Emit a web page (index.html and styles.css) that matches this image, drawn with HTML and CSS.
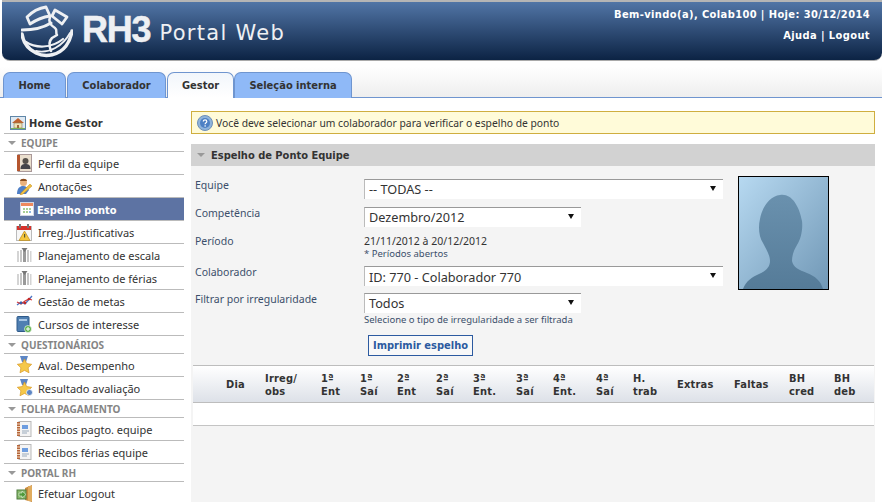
FILE: index.html
```html
<!DOCTYPE html>
<html lang="pt-BR">
<head>
<meta charset="utf-8">
<title>RH3 Portal Web</title>
<link rel="stylesheet" href="styles.css">
</head>
<body>
<svg class="defs" width="0" height="0" aria-hidden="true">
  <symbol id="i-bars" viewBox="0 0 16 16">
    <rect x="1" y="4" width="2" height="11" fill="#d4d4d4"/><rect x="4" y="3" width="2" height="12" fill="#c6c6c6"/>
    <rect x="7" y="1" width="3" height="14" fill="#9a9a9a"/><rect x="11" y="3" width="2" height="12" fill="#c6c6c6"/><rect x="14" y="4" width="1.500" height="11" fill="#d4d4d4"/>
    <path d="M5.500 1h6L8.500 5z" fill="#777"/>
  </symbol>
  <symbol id="i-note" viewBox="0 0 16 16">
    <rect x="3" y="0.500" width="12" height="15" fill="#f4f4f4" stroke="#b9b9b9"/>
    <rect x="1" y="1" width="3" height="14" fill="#b5653a"/>
    <path d="M1 3h3M1 5.500h3M1 8h3M1 10.500h3M1 13h3" stroke="#f0d8c0"/>
    <path d="M6 4h6v4H6z" fill="#6d9de0"/><path d="M6 10h7M6 12h5" stroke="#9ab"/>
  </symbol>
  <symbol id="i-star" viewBox="0 0 18 18">
    <path d="M4 0h8l-2 6H6z" fill="#5d86c4"/>
    <path d="M8.500 3l2.200 4.600 5 .7-3.600 3.500.9 5-4.500-2.400L4 16.800l.9-5L1.300 8.300l5-.7z" fill="#f5c84a" stroke="#d99a26" stroke-width=".7"/>
  </symbol>
</svg>

<header class="top">
  <div class="brand">
    <svg class="globe" width="52" height="54" viewBox="0 0 52 54" aria-hidden="true">
      <g fill="none" stroke="#eef0f3" stroke-linecap="round" stroke-linejoin="round">
        <path d="M6 13 C11 8 18 4 25 3 L29 12 C22 13 15 16 9 20 Z" stroke-width="2.800"/>
        <path d="M34 6 L46 13 L41 20 L31 12 Z" stroke-width="2.800"/>
        <path d="M1 26 C10 26 22 24 30 19" stroke-width="3"/>
        <path d="M1 30 C2 38 7 45 15 49 C25 54 38 51 45 42 C48 38 50 33 51 27" stroke-width="3.500"/>
        <path d="M5 38 C14 44 30 45 42 35" stroke-width="2.200"/>
        <path d="M29 13 C27 18 29 21 34 24 C37 26 34 29 36 31 L31 34 C28 37 28 42 30 47" stroke-width="2.500"/>
        <path d="M15 47 C28 50 42 42 49 29" stroke-width="1.800"/>
      </g>
    </svg>
    <span class="rh3">RH3</span>
    <span class="portal">Portal Web</span>
  </div>
  <div class="usr">
    <p>Bem-vindo(a), Colab100 | Hoje: 30/12/2014</p>
    <p>Ajuda | Logout</p>
  </div>
</header>

<nav class="tabs">
  <a class="tab t1">Home</a>
  <a class="tab t2">Colaborador</a>
  <a class="tab t3 on">Gestor</a>
  <a class="tab t4">Seleção interna</a>
</nav>

<div class="body">
  <aside class="side">
    <a class="home">
      <svg width="16" height="14" viewBox="0 0 16 14" aria-hidden="true"><rect x=".5" y=".5" width="15" height="13" fill="#dfe9f2" stroke="#5f86a8"/><path d="M2 7l6-5 6 5" fill="#c0622e"/><rect x="4" y="7" width="8" height="5" fill="#f1e3b8" stroke="#8a7a50" stroke-width=".6"/><rect x="7" y="9" width="2" height="3" fill="#a06a3a"/><rect x="1" y="12" width="14" height="1" fill="#7bb159"/></svg>
      <span>Home Gestor</span>
    </a>
    <div class="sec"><i class="arr"></i>EQUIPE</div>
    <a class="it">
      <svg width="16" height="18" viewBox="0 0 16 18" aria-hidden="true"><rect x="2" y=".5" width="13.500" height="17" fill="#eadfce" stroke="#a99"/><rect x="1" y="1" width="3" height="16" fill="#b5562f"/><circle cx="9.500" cy="7" r="3" fill="#55504a"/><path d="M4.500 15c0-4 2-5 5-5s5 1 5 5z" fill="#45454a"/></svg>
      <span>Perfil da equipe</span>
    </a>
    <a class="it">
      <svg width="17" height="17" viewBox="0 0 17 17" aria-hidden="true"><circle cx="7.500" cy="4.500" r="3.500" fill="#eab27d"/><path d="M4 3c0-3 7-3 7 0z" fill="#8a4d1e"/><path d="M1 16c0-6 3-8 6-8s5 2 6 4l-3 4z" fill="#4f7fc6"/><path d="M5 15l9-9 2 2-9 8-3 1z" fill="#f0c040" stroke="#c08a20" stroke-width=".5"/></svg>
      <span>Anotações</span>
    </a>
    <a class="it act">
      <svg width="14" height="14" viewBox="0 0 14 14" aria-hidden="true"><rect x=".5" y=".5" width="13" height="13" fill="#fff" stroke="#cfd6e4"/><rect x="1" y="1" width="12" height="3" fill="#ee8a5e"/><path d="M3 6h2v2H3zM6 6h2v2H6zM9 6h2v2H9zM3 9h2v2H3zM6 9h2v2H6z" fill="#a9cf95"/><path d="M9 9h2v2H9z" fill="#8fb5e4"/></svg>
      <span>Espelho ponto</span>
    </a>
    <a class="it">
      <svg width="16" height="17" viewBox="0 0 16 17" aria-hidden="true"><rect x=".5" y="2.500" width="15" height="14" fill="#f6f6f6" stroke="#bbb"/><rect x="1" y="2" width="14" height="4" fill="#d6322c"/><rect x="3" y="0" width="2" height="4" fill="#777"/><rect x="11" y="0" width="2" height="4" fill="#777"/><path d="M8.500 7l5.500 9.500H3z" fill="#f4c63c" stroke="#b98a1e" stroke-width=".7"/><rect x="8" y="10" width="1.200" height="3.500" fill="#553"/></svg>
      <span>Irreg./Justificativas</span>
    </a>
    <a class="it"><svg width="16" height="16" aria-hidden="true"><use href="#i-bars"/></svg><span>Planejamento de escala</span></a>
    <a class="it"><svg width="16" height="16" aria-hidden="true"><use href="#i-bars"/></svg><span>Planejamento de férias</span></a>
    <a class="it">
      <svg width="17" height="12" viewBox="0 0 17 12" aria-hidden="true"><path d="M1 10L5 7l4 2 7-8" fill="none" stroke="#4a74c4" stroke-width="1.300"/><path d="M1 7l4 2 4-3 4-2 3 1" fill="none" stroke="#d23b3b" stroke-width="1.300"/><circle cx="5" cy="8" r="1.300" fill="#3a5fa8"/><circle cx="9" cy="8" r="1.300" fill="#c02a2a"/><circle cx="13" cy="4" r="1.300" fill="#c02a2a"/></svg>
      <span>Gestão de metas</span>
    </a>
    <a class="it">
      <svg width="16" height="17" viewBox="0 0 16 17" aria-hidden="true"><rect x="1" y=".5" width="12" height="15" rx="1" fill="#4f7fb2" stroke="#2f5a8a"/><rect x="3" y="3" width="8" height="2" fill="#a8c6e4"/><circle cx="12" cy="13" r="3.500" fill="#5bb04a" stroke="#fff" stroke-width=".6"/><path d="M10 13h4M12 11v4" stroke="#fff"/></svg>
      <span>Cursos de interesse</span>
    </a>
    <div class="sec"><i class="arr"></i>QUESTIONÁRIOS</div>
    <a class="it"><svg width="18" height="18" aria-hidden="true"><use href="#i-star"/></svg><span>Aval. Desempenho</span></a>
    <a class="it">
      <svg width="18" height="18" viewBox="0 0 18 18" aria-hidden="true"><use href="#i-star"/><circle cx="13.500" cy="13.500" r="3" fill="#5d86c4" stroke="#fff" stroke-width=".7"/></svg>
      <span>Resultado avaliação</span>
    </a>
    <div class="sec"><i class="arr"></i>FOLHA PAGAMENTO</div>
    <a class="it"><svg width="16" height="16" aria-hidden="true"><use href="#i-note"/></svg><span>Recibos pagto. equipe</span></a>
    <a class="it"><svg width="16" height="16" aria-hidden="true"><use href="#i-note"/></svg><span>Recibos férias equipe</span></a>
    <div class="sec"><i class="arr"></i>PORTAL RH</div>
    <a class="it">
      <svg width="17" height="17" viewBox="0 0 17 17" aria-hidden="true"><path d="M9 3l7-3v17l-7-2z" fill="#c98a3c"/><rect x="12" y="1" width="4" height="15" fill="#e0ac5e"/><rect x="1" y="5" width="9" height="9" fill="#86b86a" stroke="#4d7a3c"/><path d="M3 8h3V6l4 3.500L6 13v-2H3z" fill="#4e9a3a" stroke="#fff" stroke-width=".5"/></svg>
      <span>Efetuar Logout</span>
    </a>
  </aside>

  <main class="main">
    <div class="alert">
      <svg width="16" height="16" viewBox="0 0 16 16" aria-hidden="true"><circle cx="8" cy="8" r="7.500" fill="#8fb4dc" stroke="#6d8fb8"/><circle cx="8" cy="8" r="5" fill="#4d80c4"/><path d="M6.300 6.500c0-2.200 3.500-2.200 3.500 0 0 1.300-1.700 1.300-1.700 2.700" fill="none" stroke="#fff" stroke-width="1.200"/><rect x="7.500" y="10.300" width="1.300" height="1.300" fill="#fff"/></svg>
      <span>Você deve selecionar um colaborador para verificar o espelho de ponto</span>
    </div>
    <section class="panel">
      <h2 class="phead"><i class="arr"></i>Espelho de Ponto Equipe</h2>
      <div class="formwrap">
        <div class="form">
          <label class="lb">Equipe</label>
          <div class="sel wide">-- TODAS --<i class="caret"></i></div>
          <label class="lb">Competência</label>
          <div class="sel">Dezembro/2012<i class="caret"></i></div>
          <label class="lb">Período</label>
          <div class="per">21/11/2012 à 20/12/2012<small>* Períodos abertos</small></div>
          <label class="lb">Colaborador</label>
          <div class="sel wide tight">ID: 770 - Colaborador 770<i class="caret"></i></div>
          <label class="lb">Filtrar por irregularidade</label>
          <div class="filt">
            <div class="sel">Todos<i class="caret"></i></div>
            <small>Selecione o tipo de irregularidade a ser filtrada</small>
            <button class="print" type="button">Imprimir espelho</button>
          </div>
        </div>
        <div class="photo">
          <svg width="89" height="112" viewBox="0 0 89 112" aria-hidden="true">
            <defs>
              <linearGradient id="pbg" x1="0" y1="0" x2="1" y2="1"><stop offset="0" stop-color="#b7d9f1"/><stop offset="1" stop-color="#7198b6"/></linearGradient>
              <linearGradient id="pfg" x1="0" y1="0" x2="0" y2="1"><stop offset="0" stop-color="#6a91ae"/><stop offset="1" stop-color="#557b98"/></linearGradient>
            </defs>
            <rect width="89" height="112" fill="url(#pbg)"/>
            <path d="M41 18C52 16 60 28 63 44C64 52 62 62 58 68C55 73 53 78 53 84C54 90 60 93 68 96C76 99 82 104 84 112H4C7 104 13 100 20 97C27 94 31 90 31 84C31 78 27 72 24 66C20 60 19 50 21 42C23 30 31 19 41 18Z" fill="url(#pfg)"/>
          </svg>
        </div>
      </div>
      <div class="tbl">
        <div class="th">
          <span>Dia</span><span>Irreg/<br>obs</span><span>1ª<br>Ent</span><span>1ª<br>Saí</span><span>2ª<br>Ent</span><span>2ª<br>Saí</span><span>3ª<br>Ent.</span><span>3ª<br>Saí</span><span>4ª<br>Ent.</span><span>4ª<br>Saí</span><span>H.<br>trab</span><span>Extras</span><span>Faltas</span><span>BH<br>cred</span><span>BH<br>deb</span>
        </div>
        <div class="tr"></div>
      </div>
    </section>
  </main>
</div>
</body>
</html>
```

FILE: styles.css
```css
* { box-sizing: border-box; }
html, body { margin: 0; padding: 0; height: 100%; overflow: hidden; }
body { background: #fff; font-family: "Noto Sans", sans-serif; font-size: 11px; color: #333; height: 502px; }
p, h2 { margin: 0; }
.defs { position: absolute; }

.top {
  height: 61px; margin-left: 2px; border-top: 2px solid #b5b5b5; border-bottom: 1px solid #aaa;
  border-radius: 0 0 8px 8px;
  background: linear-gradient(#5175a6, #0c2344);
  display: flex; justify-content: space-between; color: #fff;
}
.brand { display: flex; align-items: flex-start; padding-left: 19px; }
.globe { margin-top: 2px; }
.rh3 { font: bold 36px/1 "Liberation Sans", sans-serif; color: #eef0f3; margin: 10px 0 0 9px; letter-spacing: -1.200px; -webkit-text-stroke: .5px #eef0f3; }
.portal { font: 21px/1 "DejaVu Sans", sans-serif; color: #eef0f3; margin: 21px 0 0 9px; letter-spacing: 1.300px; }
.usr { padding: 2px 12px 0 0; text-align: right; font: 700 11px/21px "DejaVu Sans Condensed", "DejaVu Sans", sans-serif; letter-spacing: .4px; }

.tabs { height: 37px; padding: 11px 0 0 3px; border-bottom: 1px solid #6f95cf; display: flex; background: linear-gradient(#fff 15%, #eee); }
.tab { height: 26px; border: 1px solid #6f95cf; border-bottom: 0; border-radius: 7px 7px 0 0; background: #8fb9f7; font: 700 11px/25px "DejaVu Sans Condensed", "DejaVu Sans", sans-serif; color: #333; text-align: center; }
.t1 { width: 63px; }
.t2 { width: 99px; margin-left: 1px; }
.t3 { width: 67px; margin-left: 1px; background: linear-gradient(#f2f6fb, #fff); }
.t4 { width: 118px; }

.body { display: flex; align-items: stretch; height: 404px; }
.side { width: 180px; margin-left: 4px; padding-top: 14px; flex: none; }
.home { height: 22px; display: flex; align-items: center; gap: 3px; padding-left: 6px; font: 700 11px "DejaVu Sans Condensed", "DejaVu Sans", sans-serif; letter-spacing: .1px; color: #333; border-bottom: 1px solid #bbb; }
.home span { padding-top: 2px; }
.sec { height: 18px; border-bottom: 1px solid #bbb; display: flex; align-items: center; font-size: 10px; font-weight: 700; color: #858585; padding-left: 4px; }
.arr { display: inline-block; width: 0; height: 0; border: 4px solid transparent; border-top: 4px solid #999; border-bottom: 0; margin-right: 5px; }
.it { height: 23px; border-bottom: 1px solid #bbb; display: flex; align-items: center; padding-left: 12px; position: relative; color: #333; font-size: 11px; }
.it svg { flex: none; }
.it span { position: absolute; left: 34px; }
.act { background: #5d73a3; color: #fff; font: 700 11px "DejaVu Sans Condensed", "DejaVu Sans", sans-serif; }
.it.act span { left: 33px; padding-top: 2px; }
.act svg { margin-left: 4px; }

.main { width: 684px; margin-left: 7px; flex: none; padding-top: 13px; }
.alert { height: 23px; border: 1px solid #cfae3f; background: #fffbd9; display: flex; align-items: center; gap: 3px; padding-left: 5px; font-size: 10.300px; }
.panel { margin-top: 10px; background: #f4f4f4; height: 358px; }
.phead { height: 22px; background: #d2d2d2; font: 700 11px "DejaVu Sans Condensed", "DejaVu Sans", sans-serif; color: #333; display: flex; align-items: center; padding-left: 6px; }
.phead .arr { margin-right: 6px; }
.formwrap { position: relative; height: 199px; }
.form { display: grid; grid-template-columns: 169px 1fr; padding: 13px 0 0 4px; align-items: start; }
.lb { color: #3b4f6b; font-size: 10.500px; line-height: 12px; }
.sel { height: 20px; width: 217px; background: #fff; border-top: 1px solid #999; border-left: 1px solid #bbb; position: relative; font-size: 12.700px; line-height: 19px; padding-left: 4px; color: #333; margin-bottom: 8px; }
.wide { width: 359px; }
.tight { margin-bottom: 7px; line-height: 21px; }
.caret { position: absolute; right: 7px; top: 6px; border: 3px solid transparent; border-top: 5px solid #111; border-bottom: 0; width: 0; height: 0; }
.per { height: 31px; font-size: 10.500px; line-height: 13px; }
.per small, .filt small { display: block; font-size: 9.500px; line-height: 12px; color: #3b4f6b; }
.filt .sel { margin-bottom: 0; }
.filt small { margin-top: 1px; }
.print { display: block; margin: 9px 0 0 4px; width: 105px; height: 21px; border: 1px solid #2c5aa0; background: #f8f8f8; color: #2c5aa0; font: 700 11px "DejaVu Sans Condensed", "DejaVu Sans", sans-serif; padding: 0; white-space: nowrap; }
.photo { position: absolute; left: 547px; top: 10px; width: 91px; height: 114px; border: 1px solid #000; }
.photo svg { display: block; }

.tbl { margin-left: 2px; width: 681px; }
.th { height: 38px; padding-top: 1px; border-top: 1px solid #bdbdbd; border-bottom: 1px solid #bdbdbd; background: linear-gradient(#fff, #dde1e8); display: grid; grid-template-columns: 39px 56px 39px 37px 39px 37px 43px 37px 43px 37px 44px 57px 55px 45px 1fr; padding-left: 33px; align-items: center; font: 700 11px/13px "DejaVu Sans Condensed", "DejaVu Sans", sans-serif; letter-spacing: .2px; color: #333; }
.tr { height: 23px; background: #fff; border-bottom: 1px solid #c4c4c4; }
```
